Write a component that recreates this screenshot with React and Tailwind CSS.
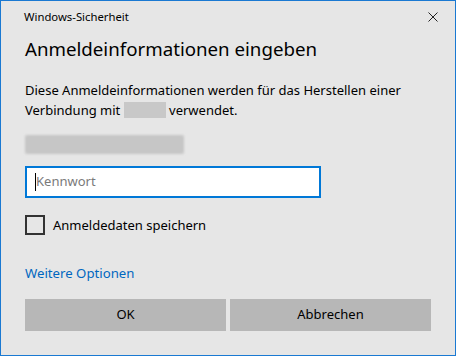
export default function App() {
  return (
    <div className="w-[456px] h-[356px] bg-[#e6e6e6] border border-[#1a79d2] flex flex-col text-black" style={{ fontFamily: '"Noto Sans", "Open Sans", sans-serif' }}>
      <div className="flex items-start justify-between pl-[23px] pr-[17px] pt-[8px] h-[30px]">
        <span className="text-[11.3px] leading-[16px]">Windows-Sicherheit</span>
        <svg width="10" height="10" viewBox="0 0 10 10" className="mt-[3px]">
          <path d="M0.5 0.5 L9.5 9.5 M9.5 0.5 L0.5 9.5" stroke="#222" strokeWidth="1" />
        </svg>
      </div>
      <div className="pl-[24px] pr-[20px]">
        <h1 className="text-[18.7px] leading-[28px] mt-[4px]">Anmeldeinformationen eingeben</h1>
        <p className="text-[13px] leading-[20px] mt-[17px]">
          Diese Anmeldeinformationen werden für das Herstellen einer Verbindung mit{' '}
          <span className="inline-block w-[42px] h-[16px] bg-[#c8c8c8] align-[-3px]"></span>{' '}verwendet.
        </p>
        <div className="mt-[15px] w-[159px] h-[19px] bg-[#c6c6c6] rounded-[2px] blur-[1px]"></div>
        <div className="mt-[12px] w-[296px] h-[32px] bg-white border-2 border-[#0078d7] flex items-center px-[8px]">
          <span className="w-[1px] h-[18px] bg-black"></span>
          <span className="text-[13px] text-[#7a7a7a]">Kennwort</span>
        </div>
        <label className="mt-[17px] flex items-center gap-[8px]">
          <span className="w-[20px] h-[20px] border-2 border-[#333] box-border"></span>
          <span className="text-[13px] leading-[20px]">Anmeldedaten speichern</span>
        </label>
        <div className="mt-[28px] text-[13.2px] leading-[20px] text-[#0067c0]">Weitere Optionen</div>
        <div className="mt-[16px] flex gap-[4px]">
          <button className="w-[201px] h-[32px] bg-[#b7b7b7] text-[13px]">OK</button>
          <button className="w-[201px] h-[32px] bg-[#b7b7b7] text-[13px]">Abbrechen</button>
        </div>
      </div>
    </div>
  );
}
